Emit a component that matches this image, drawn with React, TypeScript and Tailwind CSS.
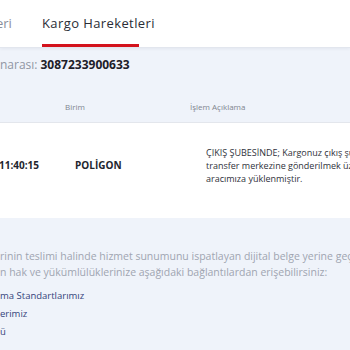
import React from 'react';

const links = ['ma Standartlarımız', 'erimiz', 'ü'];

const App: React.FC = () => {
  return (
    <div
      className="w-[350px] h-[350px] overflow-hidden bg-[#eff3fa] text-[#23262f]"
      style={{ fontFamily: '"Open Sans", "Liberation Sans", sans-serif' }}
    >
      {/* Tabs */}
      <div className="flex h-[48px] bg-white border-b border-[#e2e6ee] shadow-[0_1px_3px_rgba(30,40,70,0.06)]">
        <div className="w-[42px] shrink-0 flex items-center border-b-[3px] border-transparent pt-[3px] text-[13px] text-[#8a8f9c]">
          <span className="-ml-[4px]">eri</span>
        </div>
        <div className="w-[97px] shrink-0 flex items-center border-b-[3px] border-[#d3121c] pt-[3px] text-[13px] tracking-[0.4px] text-[#2a2d36] whitespace-nowrap">
          Kargo Hareketleri
        </div>
      </div>

      {/* Tracking number */}
      <div className="pt-[6px] h-[27px] flex items-center text-[12px] whitespace-nowrap">
        <span className="text-[#9096a3]">narası:</span>
        <span className="ml-[3px] font-bold text-[#1d2029]">3087233900633</span>
      </div>

      {/* Table header */}
      <div className="flex items-end h-[48px] pb-[9px] border-b border-[#e3e6ec] text-[8px] text-[#80858f]">
        <span className="w-[65px] shrink-0" />
        <span className="w-[125px] shrink-0">Birim</span>
        <span>İşlem Açıklama</span>
      </div>

      {/* Row */}
      <div className="flex items-center h-[95px] pb-[11px] bg-white whitespace-nowrap">
        <span className="w-[76px] shrink-0 -ml-[1px] text-[10px] font-bold text-[#22252e]">11:40:15</span>
        <span className="w-[131px] shrink-0 text-[10px] font-bold text-[#22252e]">POLİGON</span>
        <div className="text-[9px] leading-[13px] text-[#2f323b]">
          <div>ÇIKIŞ ŞUBESİNDE; Kargonuz çıkış şubesinden</div>
          <div>transfer merkezine gönderilmek üzere</div>
          <div>aracımıza yüklenmiştir.</div>
        </div>
      </div>

      {/* Info text */}
      <div className="pt-[30px] text-[10.5px] leading-[16px] text-[#a0a5b1] whitespace-nowrap">
        <div>rinin teslimi halinde hizmet sunumunu ispatlayan dijital belge yerine geçer</div>
        <div>n hak ve yükümlülüklerinize aşağıdaki bağlantılardan erişebilirsiniz:</div>
      </div>

      <ul className="pt-[7px] text-[9.5px] leading-[18px] text-[#34437a]">
        {links.map((l) => (
          <li key={l}>{l}</li>
        ))}
      </ul>
    </div>
  );
};

export default App;
